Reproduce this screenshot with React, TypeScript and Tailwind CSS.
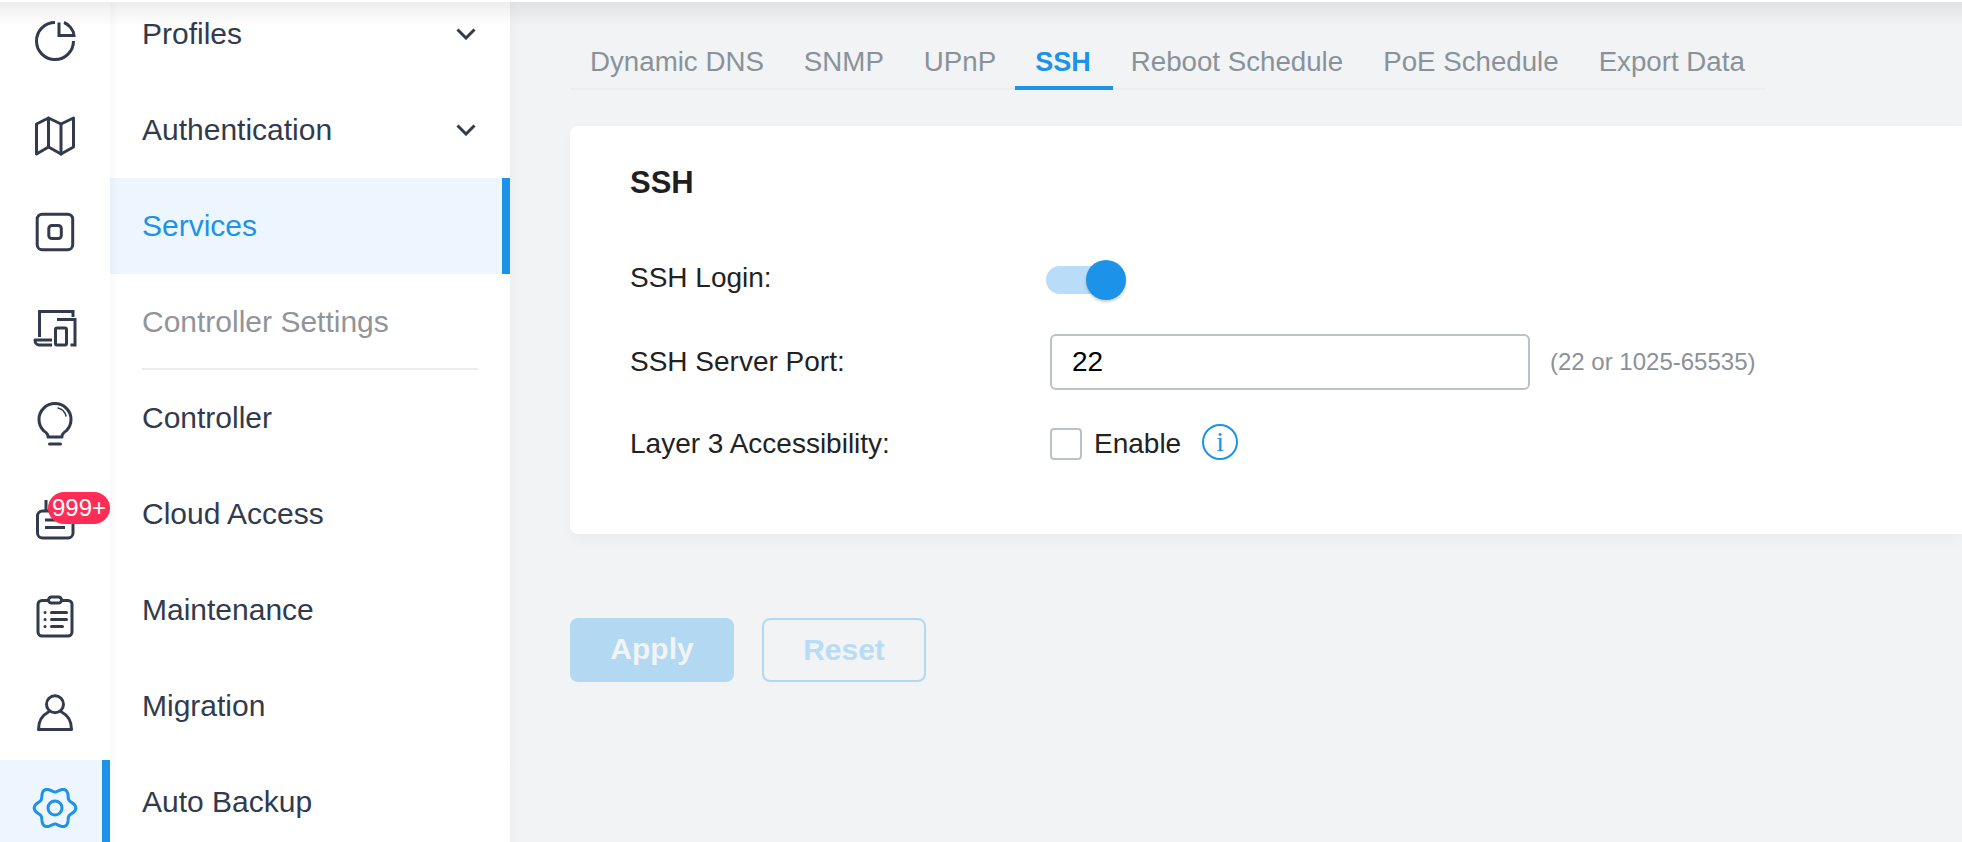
import React from "react";

const navItems = [
  { label: "Profiles", arrow: true },
  { label: "Authentication", arrow: true },
  { label: "Services", active: true },
  { label: "Controller Settings", header: true },
  { label: "Controller" },
  { label: "Cloud Access" },
  { label: "Maintenance" },
  { label: "Migration" },
  { label: "Auto Backup" },
];

const tabs = [
  { label: "Dynamic DNS", cls: "px-5" },
  { label: "SNMP", cls: "px-5" },
  { label: "UPnP", cls: "pl-5 pr-[19px]" },
  { label: "SSH", cls: "pl-5 pr-[22px]", active: true },
  { label: "Reboot Schedule", cls: "pl-[18px] pr-5" },
  { label: "PoE Schedule", cls: "px-5" },
  { label: "Export Data", cls: "px-5" },
];

// six soft lobes round the centre of a 48 box
const gearPath = () => {
  const pts: string[] = [];
  for (let i = 0; i < 120; i++) {
    const a = (i / 120) * Math.PI * 2;
    const r = 18.4 + 2.4 * Math.cos(6 * a);
    pts.push(`${(24 + r * Math.cos(a)).toFixed(2)} ${(24 + r * Math.sin(a)).toFixed(2)}`);
  }
  return `M${pts.join("L")}Z`;
};

function Icon({ children, color = "#323b4d" }: { children: React.ReactNode; color?: string }) {
  return (
    <svg width="48" height="48" viewBox="0 0 48 48" fill="none" stroke={color} strokeWidth="3" strokeLinejoin="round" strokeLinecap="round">
      {children}
    </svg>
  );
}

const railIcons = [
  <Icon key="pie">
    <path d="M24 6.5A18.5 18.5 0 1 0 42.5 25" strokeLinecap="butt" />
    <path d="M28 6.5V19.5H43C42.5 13 37 8 33 6.5" strokeLinecap="butt" strokeLinejoin="miter" />
  </Icon>,
  <Icon key="map">
    <path d="M5.5 12L17.5 6L30 12L42.5 6V35L30 42L17.5 35L5.5 42Z" />
    <path d="M17.5 6V35M30 12V42" />
  </Icon>,
  <Icon key="device">
    <rect x="6.2" y="6.2" width="35.5" height="35.5" rx="5" />
    <rect x="17.8" y="17.5" width="12.5" height="13" rx="3" />
  </Icon>,
  <Icon key="clients">
    <path d="M8.5 33V7.5H42V13" strokeLinecap="butt" strokeLinejoin="miter" />
    <path d="M21 36H4C4 39 6 41 8 41H21" strokeLinecap="butt" />
    <path d="M27.5 17V15.5H44V41H39.5" strokeLinecap="butt" strokeLinejoin="miter" />
    <rect x="24.5" y="24" width="11" height="17" rx="1.5" />
  </Icon>,
  <Icon key="bulb">
    <path d="M17 37H31V36C31 34 33 32.5 35.5 30.6A16 16 0 1 0 12.5 30.6C15 32.5 17 34 17 36Z" />
    <path d="M18.5 44H29.5" />
    <path d="M27 8C31 9 34 12 35 16" strokeWidth="1.5" />
  </Icon>,
  <Icon key="notice">
    <rect x="6.5" y="15" width="35.5" height="27" rx="5" />
    <path d="M15 4V15M14 24H34M14 31.5H34" strokeLinecap="butt" />
  </Icon>,
  <Icon key="log">
    <rect x="7" y="8.5" width="34" height="35.5" rx="4" />
    <rect x="17.5" y="5" width="13" height="6" rx="3" fill="#fff" />
    <path d="M20.5 20.5H35.5M20.5 27.5H35.5M20.5 34.5H31.5" />
    <path d="M14 20.5H14.1M14 27.5H14.1M14 34.5H14.1" />
  </Icon>,
  <Icon key="user">
    <circle cx="24" cy="16.3" r="8.5" />
    <path d="M17.5 24C11.5 27 7.5 33.5 7.5 41.5H40.5C40.5 33.5 36.5 27 30.5 24" />
  </Icon>,
  <Icon key="gear" color="#1c93e8">
    <path d={gearPath()} />
    <circle cx="24" cy="24" r="7" />
  </Icon>,
];

function Rail() {
  return (
    <div className="w-[110px] shrink-0 flex flex-col -mt-[8px]">
      {railIcons.map((icon, i) => {
        const active = i === 8;
        return (
          <div
            key={i}
            className={`relative h-[96px] shrink-0 flex items-center justify-center ${active ? "bg-[#edf6fe]" : ""}`}
          >
            {icon}
            {active && <div className="absolute right-0 top-0 bottom-0 w-2 bg-[#1c93e8]" />}
            {i === 5 && (
              <div className="absolute right-0 top-5 h-8 w-[62px] rounded-full bg-[#ff2d55] text-white text-[24px] leading-8 text-center">
                999+
              </div>
            )}
          </div>
        );
      })}
    </div>
  );
}

function Nav() {
  return (
    <div className="relative w-[400px] shrink-0 flex flex-col -mt-[14px]">
      {navItems.map((item) => (
        <div
          key={item.label}
          className={`relative h-[96px] shrink-0 flex items-center justify-between pl-8 pr-[34px] text-[30px] ${
            item.active ? "bg-[#edf6fe] text-[#1c93e8]" : item.header ? "text-[#919499]" : "text-[#323b4d]"
          }`}
        >
          <span className="-mt-[2px]">{item.label}</span>
          {item.arrow && (
            <svg width="20" height="12" viewBox="0 0 20 12" fill="none" stroke="#323b4d" strokeWidth="3">
              <path d="M1.5 1.5L10 10L18.5 1.5" />
            </svg>
          )}
          {item.active && <div className="absolute right-0 top-0 bottom-0 w-2 bg-[#1c93e8]" />}
          {item.header && <div className="absolute left-8 right-8 bottom-0 h-[2px] bg-[#ececee]" />}
        </div>
      ))}
      <div className="absolute left-0 top-0 bottom-0 w-2 bg-gradient-to-r from-black/[0.025] to-transparent" />
    </div>
  );
}

function Row({ label, children, className }: { label: string; children: React.ReactNode; className: string }) {
  return (
    <div className={`flex items-center ${className}`}>
      <div className="w-[420px] shrink-0 text-[28px] text-[#222]">{label}</div>
      {children}
    </div>
  );
}

function Main() {
  return (
    <div className="relative flex-1 min-w-0 bg-[#f1f3f5] flex flex-col pl-[60px]">
      <div className="mt-9 h-[54px] w-[1195px] flex border-b-2 border-[#ebedef]">
        {tabs.map((t) => (
          <div
            key={t.label}
            className={`h-[54px] pt-[2px] border-b-4 flex items-center whitespace-nowrap ${t.cls} ${
              t.active
                ? "border-[#1c93e8] text-[#1c93e8] font-bold text-[27px]"
                : "border-transparent text-[#8a9299] text-[27.7px]"
            }`}
          >
            {t.label}
          </div>
        ))}
      </div>
      <div className="mt-9 h-[408px] bg-white rounded-l-lg shadow-[0_6px_14px_rgba(0,0,0,0.03)] pl-[60px] pt-[38px]">
        <div className="text-[31px] font-bold text-[#1f1f1f] leading-[38px]">SSH</div>
        <Row label="SSH Login:" className="h-10 mt-[56px]">
          <div className="relative w-[74px] h-7 ml-[-4px] mt-1 rounded-full bg-[#b9ddf8]">
            <div className="absolute right-[-6px] top-[-6px] w-10 h-10 rounded-full bg-[#1c93e8] shadow-[0_2px_3px_rgba(0,0,0,0.2)]" />
          </div>
        </Row>
        <Row label="SSH Server Port:" className="h-14 mt-[36px]">
          <input
            defaultValue="22"
            className="w-[480px] h-14 shrink-0 border-2 border-[#bcc1c5] rounded-md px-5 text-[28px] text-black outline-none"
          />
          <span className="ml-5 text-[24px] text-[#8a9299]">(22 or 1025-65535)</span>
        </Row>
        <Row label="Layer 3 Accessibility:" className="h-10 mt-[34px]">
          <div className="w-8 h-8 border-2 border-[#bcc1c5] rounded-[4px] shrink-0" />
          <span className="ml-3 text-[28px] text-[#222]">Enable</span>
          <div className="ml-[21px] -mt-1 w-9 h-9 rounded-full border-2 border-[#1c93e8] text-[#1c93e8] flex items-center justify-center font-['Liberation_Serif',serif] text-[28px] leading-none">
            i
          </div>
        </Row>
      </div>
      <div className="mt-[84px] flex gap-7">
        <button className="w-[164px] h-16 pb-1 rounded-lg bg-[#b3d8f1] text-[#f1f3f5] text-[30px] font-bold">Apply</button>
        <button className="w-[164px] h-16 pb-0.5 rounded-lg border-2 border-[#b3d8f1] text-[#b8dcf5] text-[30px] font-bold">Reset</button>
      </div>
      <div className="absolute left-0 top-0 bottom-0 w-3 bg-gradient-to-r from-black/[0.02] to-transparent" />
    </div>
  );
}

export default function App() {
  return (
    <div className="relative w-[1962px] h-[842px] overflow-hidden bg-white flex font-['Liberation_Sans',Arial,sans-serif]">
      <Rail />
      <Nav />
      <Main />
      <div className="absolute left-0 right-0 top-0 h-[2px] bg-white" />
      <div className="absolute left-0 right-0 top-[2px] h-[24px] bg-gradient-to-b from-black/[0.07] to-transparent" />
    </div>
  );
}
